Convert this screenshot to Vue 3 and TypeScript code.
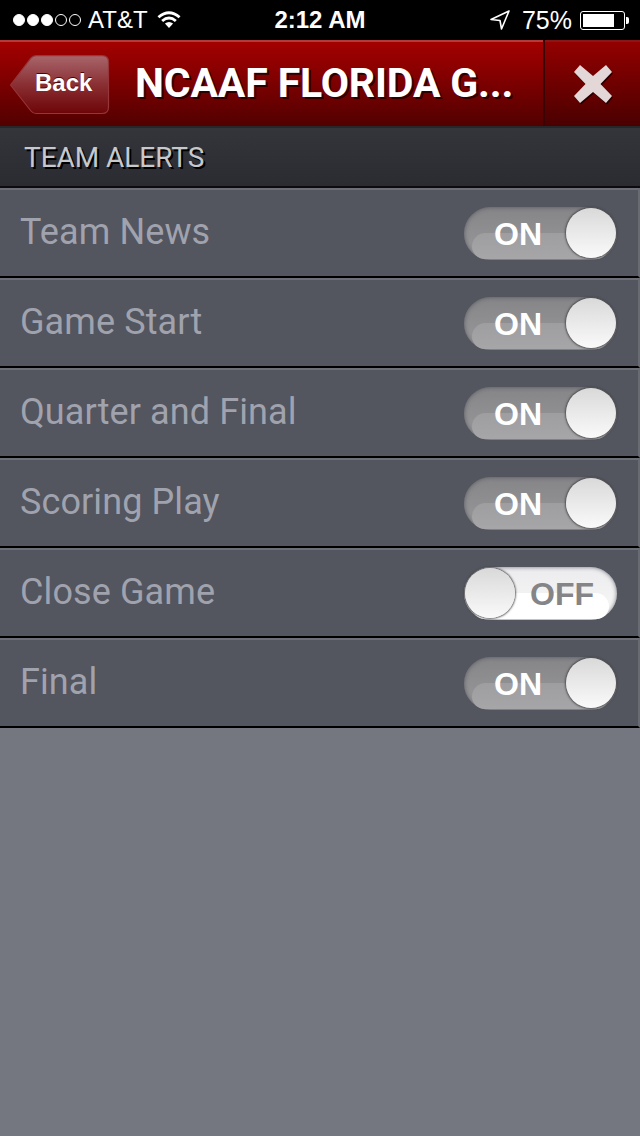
<template>
  <div class="screen">
    <div class="status-bar">
      <div class="status-left">
        <span class="signal">
          <i v-for="n in 3" :key="'on' + n" class="dot full"></i>
          <i v-for="n in 2" :key="'off' + n" class="dot"></i>
        </span>
        <span class="carrier">AT&amp;T</span>
        <svg class="wifi" width="24" height="18" viewBox="0 0 24 18">
          <path d="M0.5 6.2 Q12 -3.6 23.5 6.2 L21.6 8.3 Q12 0.2 2.4 8.3 Z" fill="#fff" />
          <path d="M4.2 10 Q12 3.2 19.8 10 L17.9 12 Q12 7.2 6.1 12 Z" fill="#fff" />
          <path d="M7.9 13.6 Q12 10.2 16.1 13.6 L12 18 Z" fill="#fff" />
        </svg>
      </div>
      <div class="clock">2:12 AM</div>
      <div class="status-right">
        <svg class="arrow" width="20" height="20" viewBox="0 0 20 20">
          <path d="M19 1 L1 9.5 L10 10.5 L11.5 19 Z" fill="none" stroke="#fff" stroke-width="1.6" stroke-linejoin="round" />
        </svg>
        <span class="percent">75%</span>
        <span class="battery"><span class="charge"></span></span>
        <span class="nub"></span>
      </div>
    </div>

    <div class="nav-bar">
      <div class="nav-main">
        <div class="back-wrap">
          <svg class="back-shape" width="100" height="60" viewBox="0 0 100 60">
            <defs>
              <linearGradient id="backFill" x1="0" y1="0" x2="0" y2="1">
                <stop offset="0" stop-color="#a8666b" />
                <stop offset="0.5" stop-color="#8a2f33" />
                <stop offset="1" stop-color="#6d0508" />
              </linearGradient>
            </defs>
            <path d="M0.5 30 L21 3 Q23 0.7 26 0.7 L92 0.7 Q98.5 0.7 98.5 7 L98.5 52 Q98.5 58.5 92 58.5 L26 58.5 Q23 58.5 21 56 Z" fill="url(#backFill)" stroke="#96353a" stroke-width="1.2" />
          </svg>
          <span class="back-label">Back</span>
        </div>
        <div class="title">NCAAF FLORIDA G...</div>
      </div>
      <div class="close-btn">
        <svg width="42" height="42" viewBox="0 0 42 42">
          <path d="M8 2 L21 13 L34 2 L40 9 L28.5 21 L40 33 L34 40 L21 29 L8 40 L2 33 L13.5 21 L2 9 Z" fill="#260000" transform="translate(1 1.5)" />
          <path d="M8 2 L21 13 L34 2 L40 9 L28.5 21 L40 33 L34 40 L21 29 L8 40 L2 33 L13.5 21 L2 9 Z" fill="#e4d7d7" />
        </svg>
      </div>
    </div>

    <div class="section-head">TEAM ALERTS</div>

    <div class="alert-list">
      <div v-for="alert in alerts" :key="alert.name" class="alert-row">
        <span class="alert-name">{{ alert.name }}</span>
        <div class="toggle" :class="alert.on ? 'is-on' : 'is-off'">
          <span class="toggle-gloss"></span>
          <span class="toggle-text">{{ alert.on ? 'ON' : 'OFF' }}</span>
          <span class="toggle-knob"></span>
        </div>
      </div>
    </div>
  </div>
</template>

<script setup lang="ts">
interface Alert {
  name: string;
  on: boolean;
}

const alerts: Alert[] = [
  { name: 'Team News', on: true },
  { name: 'Game Start', on: true },
  { name: 'Quarter and Final', on: true },
  { name: 'Scoring Play', on: true },
  { name: 'Close Game', on: false },
  { name: 'Final', on: true },
];
</script>

<style>
html,
body {
  margin: 0;
  background: #74777f;
}
</style>

<style scoped>
.screen {
  width: 640px;
  height: 1136px;
  overflow: hidden;
  display: flex;
  flex-direction: column;
  background: #74777f;
  font-family: Roboto, sans-serif;
}

.status-bar {
  height: 40px;
  flex: none;
  background: #000;
  color: #fff;
  display: grid;
  grid-template-columns: 1fr auto 1fr;
  align-items: center;
  font-family: "Liberation Sans", Arial, sans-serif;
  font-size: 24px;
}

.status-left {
  display: flex;
  align-items: center;
  padding-left: 13px;
}

.signal {
  display: flex;
  gap: 2px;
  margin-right: 7px;
}

.dot {
  width: 12px;
  height: 12px;
  box-sizing: border-box;
  border: 1px solid #fff;
  border-radius: 50%;
}

.dot.full {
  background: #fff;
}

.wifi {
  margin-left: 9px;
  margin-top: -2px;
}

.clock {
  font-weight: 700;
  font-size: 24px;
}

.status-right {
  display: flex;
  align-items: center;
  justify-content: flex-end;
  padding-right: 11px;
}

.percent {
  margin-left: 12px;
  font-size: 25px;
}

.battery {
  width: 45px;
  height: 19px;
  margin-left: 8px;
  padding: 2px;
  box-sizing: border-box;
  border: 1px solid #fff;
  border-radius: 3px;
  display: block;
}

.charge {
  display: block;
  width: 31px;
  height: 100%;
  background: #fff;
}

.nub {
  width: 3px;
  height: 7px;
  margin-left: 1px;
  background: #fff;
  border-radius: 0 2px 2px 0;
}

.nav-bar {
  height: 86px;
  flex: none;
  display: flex;
  background: #3a0404;
}

.nav-main {
  flex: 1;
  display: flex;
  align-items: center;
  box-sizing: border-box;
  padding-left: 10px;
  border-top: 2px solid #b53a3a;
  background: linear-gradient(#a40000, #520000);
}

.back-wrap {
  position: relative;
  width: 100px;
  height: 60px;
  margin-top: 1px;
}

.back-shape {
  display: block;
}

.back-label {
  position: absolute;
  left: 25px;
  top: 14px;
  color: #fff;
  font: 700 24px "Liberation Sans", Arial, sans-serif;
  text-shadow: 0 -1px 0 #4a0508;
}

.title {
  margin-left: 25px;
  margin-top: -2px;
  color: #fff;
  font-weight: 700;
  font-size: 41px;
  line-height: 52px;
  white-space: nowrap;
  letter-spacing: -0.15px;
  text-shadow: 2px 2px 0 #2e0000;
}

.close-btn {
  width: 95px;
  flex: none;
  margin-left: 2px;
  display: flex;
  align-items: center;
  justify-content: center;
  box-sizing: border-box;
  border-top: 2px solid #8c1515;
  background: linear-gradient(#930000, #4a0000);
}

.section-head {
  height: 62px;
  flex: none;
  box-sizing: border-box;
  padding: 0 0 0 24px;
  display: flex;
  align-items: center;
  border-top: 2px solid #26272b;
  border-bottom: 2px solid #0c0c0e;
  background: linear-gradient(#34353b, #2b2c31);
  color: #c6c8cc;
  font-size: 28px;
  letter-spacing: -0.05px;
  text-shadow: 2px 2px 0 #000;
}

.alert-list {
  display: flex;
  flex-direction: column;
}

.alert-row {
  height: 90px;
  box-sizing: border-box;
  display: flex;
  align-items: center;
  justify-content: space-between;
  padding: 0 23px 0 20px;
  border-top: 2px solid #6d6f77;
  border-bottom: 2px solid #000;
  border-right: 2px solid #696b73;
  background: #53555f;
}

.alert-name {
  color: #a0a3ae;
  font-size: 36px;
  letter-spacing: 0.1px;
  margin-top: -3px;
}

.toggle {
  position: relative;
  width: 153px;
  height: 53px;
  flex: none;
  margin-right: -2px;
  border-radius: 27px;
  box-shadow: inset 0 0 4px rgba(70, 72, 80, 0.75);
}

.toggle.is-on {
  background: linear-gradient(#858588, #9a9a9c);
}

.toggle.is-off {
  background: linear-gradient(#ececee, #f8f8f8);
}

.toggle-gloss {
  position: absolute;
  left: 8px;
  right: 8px;
  top: 26px;
  bottom: 1px;
  border-radius: 22px 22px 20px 20px;
}

.is-on .toggle-gloss {
  background: linear-gradient(#9e9ea0, #a6a6a8);
}

.is-off .toggle-gloss {
  background: #fff;
}

.toggle-text {
  position: absolute;
  top: 9px;
  font: 700 32px/36px "Liberation Sans", Arial, sans-serif;
}

.is-on .toggle-text {
  left: 30px;
  color: #fff;
}

.is-off .toggle-text {
  right: 23px;
  color: #858587;
}

.toggle-knob {
  position: absolute;
  top: 1px;
  width: 50px;
  height: 50px;
  border-radius: 50%;
  background: linear-gradient(#d9d9d9, #fafafa);
  box-shadow: 0 0 2px 1px rgba(60, 60, 64, 0.8);
}

.is-on .toggle-knob {
  right: 1px;
}

.is-off .toggle-knob {
  left: 1px;
}
</style>
